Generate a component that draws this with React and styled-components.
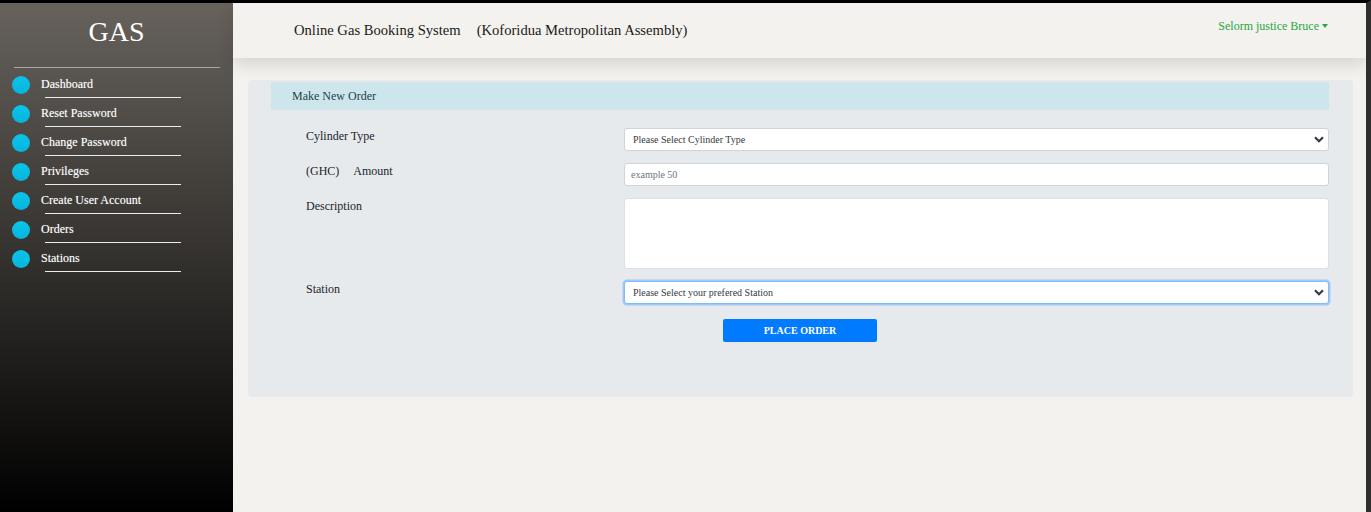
import React from "react";
import styled, { createGlobalStyle } from "styled-components";

const Global = createGlobalStyle`
  html, body { margin: 0; padding: 0; }
  body { font-family: "Liberation Serif", "Times New Roman", serif; }
  * { box-sizing: border-box; }
`;

const Page = styled.div`
  display: grid;
  grid-template-columns: 233px 1fr;
  height: 100vh;
  border-top: 3px solid #000;
  border-right: 5px solid #2f2f2f;
  background: #f3f2ee;
  overflow: hidden;
`;

const Sidebar = styled.aside`
  background: linear-gradient(to bottom, #67625c 0%, #000 100%);
  display: flex;
  flex-direction: column;
`;

const Brand = styled.div`
  margin-top: 13px;
  height: 32px;
  line-height: 32px;
  font-size: 28px;
  color: #fff;
  text-align: center;
`;

const Divider = styled.div`
  margin: 19px 13px 8px 14px;
  height: 1px;
  background: #a9a6a2;
`;

const NavList = styled.nav`
  display: flex;
  flex-direction: column;
`;

const NavItem = styled.div`
  display: flex;
  flex-direction: column;
  padding-bottom: 7px;
`;

const NavRow = styled.div`
  display: flex;
  align-items: center;
  height: 18px;
  padding-left: 12px;
`;

const Dot = styled.span`
  width: 18px;
  height: 18px;
  border-radius: 50%;
  background: linear-gradient(to bottom, #0bc4ea, #05b5dd);
  flex: none;
`;

const NavLabel = styled.span`
  margin-left: 11px;
  margin-top: -2px;
  font-size: 12px;
  color: #fff;
  text-shadow: 0 0 1px rgba(255, 255, 255, 0.4);
`;

const NavLine = styled.span`
  margin: 3px 0 0 45px;
  width: 136px;
  height: 1px;
  background: #ececec;
`;

const Main = styled.main`
  display: flex;
  flex-direction: column;
  min-width: 0;
`;

const Header = styled.header`
  height: 55px;
  flex: none;
  display: flex;
  align-items: center;
  justify-content: space-between;
  padding: 0 38px 4px 61px;
  background: #f3f2ee;
  box-shadow: 0 6px 16px rgba(0, 0, 0, 0.13);
  position: relative;
  z-index: 1;
`;

const Title = styled.div`
  font-size: 14.6px;
  color: #1a1a1a;
  display: flex;
  margin-top: 3px;
`;

const TitleSub = styled.span`
  margin-left: 16px;
`;

const User = styled.div`
  display: flex;
  align-items: center;
  font-size: 12px;
  color: #28a745;
  margin-top: -4px;
`;

const Caret = styled.span`
  margin-left: 3px;
  margin-top: -2px;
  width: 0;
  height: 0;
  border-left: 3.5px solid transparent;
  border-right: 3.5px solid transparent;
  border-top: 4px solid #28a745;
`;

const Content = styled.div`
  padding: 22px 13px 0 15px;
`;

const Card = styled.section`
  background: #e7eaed;
  border-radius: 4px;
  padding: 2px 24px 55px 23px;
`;

const CardHeader = styled.div`
  height: 28px;
  display: flex;
  align-items: center;
  padding-left: 21px;
  background: #cde6ec;
  font-size: 12px;
  color: #24434a;
`;

const Form = styled.div`
  margin-top: 18px;
  padding-left: 35px;
  display: grid;
  grid-template-columns: 318px 1fr;
  row-gap: 12px;
`;

const Label = styled.div`
  font-size: 12px;
  color: #212529;
  padding-top: 1px;
  display: flex;
`;

const LabelGap = styled.span`
  margin-left: 14px;
`;

const SelectWrap = styled.div`
  position: relative;
`;

const Select = styled.select`
  appearance: none;
  width: 100%;
  height: 23px;
  padding: 0 24px 0 8px;
  font-family: "Liberation Serif", serif;
  font-size: 10px;
  color: #343a40;
  background: #fff;
  border: 1px solid ${(p) => (p.$focused ? "#80bdff" : "#ced4da")};
  border-radius: 3px;
  box-shadow: ${(p) => (p.$focused ? "0 0 0 1.5px rgba(0,123,255,0.3)" : "none")};
  outline: none;
`;

const Chevron = styled.svg`
  position: absolute;
  right: 5px;
  top: 8px;
  width: 10px;
  height: 7px;
  pointer-events: none;
`;

const Input = styled.input`
  width: 100%;
  height: 23px;
  padding: 0 6px;
  font-family: "Liberation Serif", serif;
  font-size: 10px;
  color: #495057;
  background: #fff;
  border: 1px solid #ced4da;
  border-radius: 3px;
  outline: none;
  &::placeholder { color: #6c757d; }
`;

const TextArea = styled.textarea`
  width: 100%;
  height: 71px;
  display: block;
  resize: none;
  background: #fff;
  border: 1px solid #dcdfe3;
  border-radius: 3px;
  outline: none;
`;

const Actions = styled.div`
  display: flex;
  justify-content: center;
  margin-top: 15px;
`;

const Button = styled.button`
  width: 154px;
  height: 23px;
  border: none;
  border-radius: 2px;
  background: #007bff;
  color: #fff;
  font-family: "Liberation Serif", serif;
  font-weight: bold;
  font-size: 10px;
  padding: 0;
`;

const navItems = [
  "Dashboard",
  "Reset Password",
  "Change Password",
  "Privileges",
  "Create User Account",
  "Orders",
  "Stations",
];

function SelectField({ children, focused }) {
  return (
    <SelectWrap>
      <Select $focused={focused} defaultValue="">
        <option value="">{children}</option>
      </Select>
      <Chevron viewBox="0 0 10 7">
        <path d="M1 1.2 L5 5.2 L9 1.2" fill="none" stroke="#343a40" strokeWidth="2.2" />
      </Chevron>
    </SelectWrap>
  );
}

export default function App() {
  return (
    <>
      <Global />
      <Page>
        <Sidebar>
          <Brand>GAS</Brand>
          <Divider />
          <NavList>
            {navItems.map((n) => (
              <NavItem key={n}>
                <NavRow>
                  <Dot />
                  <NavLabel>{n}</NavLabel>
                </NavRow>
                <NavLine />
              </NavItem>
            ))}
          </NavList>
        </Sidebar>
        <Main>
          <Header>
            <Title>
              <span>Online Gas Booking System</span>
              <TitleSub>(Koforidua Metropolitan Assembly)</TitleSub>
            </Title>
            <User>
              Selorm justice Bruce
              <Caret />
            </User>
          </Header>
          <Content>
            <Card>
              <CardHeader>Make New Order</CardHeader>
              <Form>
                <Label>Cylinder Type</Label>
                <SelectField>Please Select Cylinder Type</SelectField>
                <Label>
                  <span>(GHC)</span>
                  <LabelGap>Amount</LabelGap>
                </Label>
                <Input placeholder="example 50" />
                <Label>Description</Label>
                <TextArea />
                <Label>Station</Label>
                <SelectField focused>Please Select your prefered Station</SelectField>
              </Form>
              <Actions>
                <Button>PLACE ORDER</Button>
              </Actions>
            </Card>
          </Content>
        </Main>
      </Page>
    </>
  );
}
